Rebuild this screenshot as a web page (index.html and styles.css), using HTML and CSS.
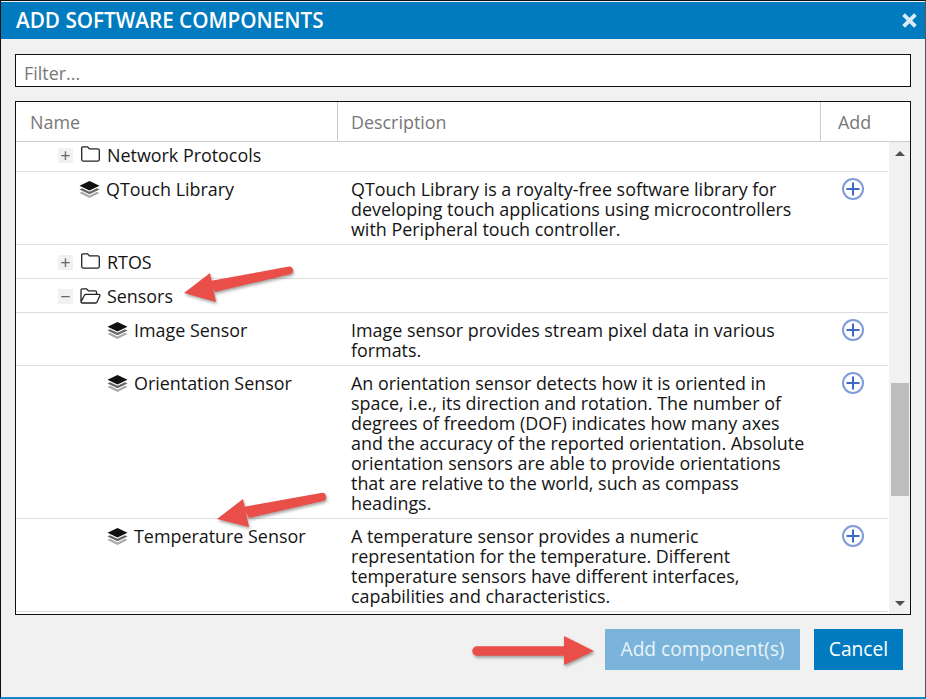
FILE: index.html
```html
<!DOCTYPE html>
<html lang="en">
<head>
<meta charset="utf-8">
<title>Add Software Components</title>
<link rel="stylesheet" href="styles.css">
</head>
<body>
<svg width="0" height="0" class="defs">
  <defs>
    <symbol id="stack" viewBox="0 0 21 17">
      <path d="M10.5 0 20.5 4.8 10.5 9.6 .5 4.8Z" fill="#111"/>
      <path d="M3 7.2.5 8.4 10.5 13.2 20.5 8.4 18 7.2 10.5 10.8Z" fill="#666"/>
      <path d="M3 10.8.5 12 10.5 17 20.5 12 18 10.8 10.5 14.5Z" fill="#aaa"/>
    </symbol>
    <symbol id="folder" viewBox="0 0 19 16">
      <path d="M1.7.8H6.6L8.4 2.9H16.8A1.5 1.5 0 0 1 18.3 4.4V13.6A1.5 1.5 0 0 1 16.8 15.1H2.2A1.5 1.5 0 0 1 .7 13.6V1.8A1 1 0 0 1 1.7.8Z" fill="none" stroke="#222" stroke-width="1.3"/>
    </symbol>
    <symbol id="folder-open" viewBox="0 0 21 16">
      <path d="M1 13.5V2A1.2 1.2 0 0 1 2.2.8H6.6L8.4 2.9H15.2A1.3 1.3 0 0 1 16.5 4.2V6M1 13.8 4.4 7.2A1.6 1.6 0 0 1 5.8 6.4H18.8A1.1 1.1 0 0 1 19.8 8L17 14A1.6 1.6 0 0 1 15.6 15H2.2A1.2 1.2 0 0 1 1 13.8Z" fill="none" stroke="#222" stroke-width="1.3"/>
    </symbol>
    <symbol id="add" viewBox="0 0 22 22">
      <circle cx="11" cy="11" r="10" fill="none" stroke="#7f9bd8" stroke-width="2"/>
      <path d="M4.5 11H17.5M11 4.5V17.5" stroke="#3f68c4" stroke-width="2" fill="none"/>
    </symbol>
  </defs>
</svg>
<main class="dialog">
  <header class="title-bar">
    <h1 class="title">ADD SOFTWARE COMPONENTS</h1>
    <svg class="close" viewBox="0 0 14 14" aria-label="Close"><path d="M1.5 1.5 12.5 12.5M12.5 1.5 1.5 12.5" stroke="#dcecf7" stroke-width="3.6" fill="none"/></svg>
  </header>
  <div class="content">
    <div class="filter">Filter...</div>
    <section class="table">
      <div class="head">
        <div class="th th-name">Name</div>
        <div class="th th-desc">Description</div>
        <div class="th th-add">Add</div>
      </div>
      <div class="body">
        <div class="rows">
          <div class="row row-first">
            <div class="name lvl-1"><span class="toggle">+</span><svg class="ic-folder"><use href="#folder"/></svg><span>Network Protocols</span></div>
          </div>
          <div class="row">
            <div class="name lvl-1b"><svg class="ic-stack"><use href="#stack"/></svg><span>QTouch Library</span></div>
            <div class="desc">QTouch Library is a royalty-free software library for developing touch applications using microcontrollers with Peripheral touch controller.</div>
            <div class="add"><svg class="ic-add"><use href="#add"/></svg></div>
          </div>
          <div class="row row-folder">
            <div class="name lvl-1"><span class="toggle">+</span><svg class="ic-folder"><use href="#folder"/></svg><span>RTOS</span></div>
          </div>
          <div class="row row-folder">
            <div class="name lvl-1"><span class="toggle">−</span><svg class="ic-folder-open"><use href="#folder-open"/></svg><span>Sensors</span></div>
          </div>
          <div class="row">
            <div class="name lvl-2"><svg class="ic-stack"><use href="#stack"/></svg><span>Image Sensor</span></div>
            <div class="desc">Image sensor provides stream pixel data in various formats.</div>
            <div class="add"><svg class="ic-add"><use href="#add"/></svg></div>
          </div>
          <div class="row">
            <div class="name lvl-2"><svg class="ic-stack"><use href="#stack"/></svg><span>Orientation Sensor</span></div>
            <div class="desc">An orientation sensor detects how it is oriented in space, i.e., its direction and rotation. The number of degrees of freedom (DOF) indicates how many axes and the accuracy of the reported orientation. Absolute orientation sensors are able to provide orientations that are relative to the world, such as compass headings.</div>
            <div class="add"><svg class="ic-add"><use href="#add"/></svg></div>
          </div>
          <div class="row">
            <div class="name lvl-2"><svg class="ic-stack"><use href="#stack"/></svg><span>Temperature Sensor</span></div>
            <div class="desc">A temperature sensor provides a numeric representation for the temperature. Different temperature sensors have different interfaces, capabilities and characteristics.</div>
            <div class="add"><svg class="ic-add"><use href="#add"/></svg></div>
          </div>
        </div>
        <div class="scrollbar">
          <span class="tri tri-up"></span>
          <div class="track"><div class="thumb"></div></div>
          <span class="tri tri-down"></span>
        </div>
      </div>
    </section>
    <footer class="actions">
      <button class="btn btn-disabled">Add component(s)</button>
      <button class="btn">Cancel</button>
    </footer>
  </div>
  <svg class="arrows" viewBox="0 0 926 699">
    <g class="arrow-group">
      <path d="M210 281 289 266.5 A4 4 0 0 1 291 274 L215 292Z" fill="#ea4e48"/>
      <path d="M184 293 210 273 216 302Z" fill="#ea4e48"/>
      <path d="M243 507 321 493 A4 4 0 0 1 323 501 L249 518Z" fill="#ea4e48"/>
      <path d="M217 519 243 499 249 527Z" fill="#ea4e48"/>
      <path d="M477 651H566" stroke="#ea4e48" stroke-width="9.5" stroke-linecap="round"/>
      <path d="M594 651 564 636V665Z" fill="#ea4e48"/>
    </g>
  </svg>
</main>
</body>
</html>
```
FILE: styles.css
```css
* { box-sizing: border-box; }
html, body { margin: 0; padding: 0; }
body { width: 926px; height: 699px; overflow: hidden; font-family: "Open Sans", "Noto Sans", sans-serif; color: #141414; }
.defs { position: absolute; }
.dialog {
  position: relative;
  width: 926px;
  height: 699px;
  display: flex;
  flex-direction: column;
  background: #f1f1f1;
  border-top: 1px solid #111;
  border-left: 1px solid #111;
  border-right: 1px solid #555;
  border-bottom: 2px solid #1a86cc;
}
.title-bar {
  height: 37px;
  margin-top: 1px;
  flex: none;
  display: flex;
  align-items: center;
  justify-content: space-between;
  padding: 0 8px 0 15px;
  background: #007bc0;
  color: #fff;
}
.title { margin: 0; font-size: 20.7px; font-weight: 600; line-height: 37px; }
.close { width: 15px; height: 15px; }
.content { flex: 1; display: flex; flex-direction: column; padding: 15px 14px 0 14px; }
.filter {
  height: 33px;
  flex: none;
  background: #fff;
  border: 1px solid #111;
  padding: 0 8px;
  font-size: 17.9px;
  line-height: 36px;
  color: #777;
}
.table {
  height: 514px;
  flex: none;
  margin-top: 14px;
  border: 1px solid #111;
  background: #fff;
  display: flex;
  flex-direction: column;
  overflow: hidden;
}
.head { height: 40px; flex: none; display: flex; border-bottom: 1px solid #ccc; color: #777; font-size: 17.9px; line-height: 40px; }
.th { padding-left: 14px; }
.th-name { width: 322px; border-right: 1px solid #ccc; }
.th-desc { width: 483px; border-right: 1px solid #ccc; padding-left: 13px; }
.th-add { padding-left: 17px; flex: 1; }
.body { flex: 1; display: flex; min-height: 0; }
.rows { width: 872px; flex: none; overflow: hidden; }
.row { display: flex; border-bottom: 1px solid #ddd; font-size: 17.9px; line-height: 20px; padding: 7px 0 5px; }
.row-folder { min-height: 34px; }
.row-first { padding-top: 3px; padding-bottom: 6px; }
.name { width: 322px; flex: none; display: flex; align-items: flex-start; }
.lvl-1 { padding-left: 42px; }
.lvl-1b { padding-left: 63px; }
.lvl-2 { padding-left: 91px; }
.toggle {
  width: 15px;
  height: 15px;
  margin-top: 3px;
  margin-right: 8px;
  background: #f1f1f1;
  color: #666;
  font-size: 18px;
  line-height: 14px;
  text-align: center;
  flex: none;
}
.ic-folder { width: 19px; height: 16px; margin: 1px 7px 0 0; flex: none; }
.ic-folder-open { width: 21px; height: 16px; margin: 2px 6px 0 -1px; flex: none; }
.ic-stack { width: 21px; height: 17px; margin: 2px 6px 0 0; flex: none; }
.desc { width: 484px; flex: none; padding: 0 15px 0 13px; }
.add { flex: 1; padding-left: 20px; }
.ic-add { width: 22px; height: 22px; display: block; margin-top: -1px; }
.scrollbar { width: 22px; margin-left: 1px; flex: none; background: #f1f1f1; display: flex; flex-direction: column; align-items: center; }
.track { flex: 1; width: 100%; padding: 227px 2px 0; }
.thumb { height: 113px; background: #bdbdbd; }
.tri { width: 0; height: 0; flex: none; border-left: 5px solid transparent; border-right: 5px solid transparent; }
.tri-up { border-bottom: 5px solid #505050; margin-top: 9px; }
.tri-down { border-top: 5px solid #505050; margin-bottom: 8px; }
.actions { flex: 1; display: flex; justify-content: flex-end; align-items: flex-start; gap: 14px; padding: 14px 8px 0 0; }
.btn {
  height: 41px;
  border: 0;
  width: 89px;
  padding: 0 0 2px;
  background: #007bc0;
  color: #fff;
  font: 19.2px "Open Sans", "Noto Sans", sans-serif;
}
.btn-disabled { background: #7ab4da; color: #e9f3fa; width: 195px; }
.arrows { position: absolute; left: -1px; top: -1px; width: 926px; height: 699px; pointer-events: none; }
.arrow-group { filter: drop-shadow(1px 2px 1.5px rgba(0,0,0,.35)); }
```
